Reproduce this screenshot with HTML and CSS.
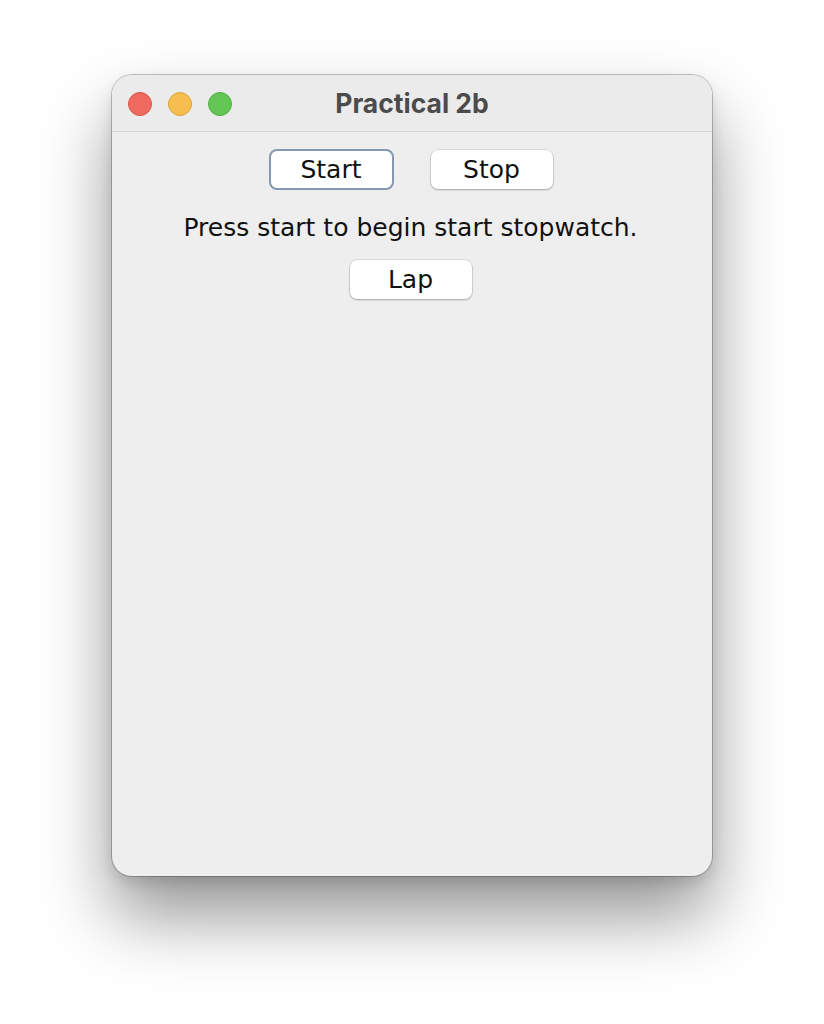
FILE: index.html
```html
<!DOCTYPE html>
<html>
<head>
<meta charset="utf-8">
<link rel="stylesheet" href="styles.css">
</head>
<body>
<div class="desktop">
  <div class="window">
    <div class="titlebar">
      <div class="lights">
        <span class="light red"></span>
        <span class="light yellow"></span>
        <span class="light green"></span>
      </div>
      <div class="title">Practical 2b</div>
    </div>
    <div class="content">
      <div class="row row-top">
        <button class="btn btn-focus">Start</button>
        <button class="btn">Stop</button>
      </div>
      <div class="row row-label">
        <span class="label">Press start to begin start stopwatch.</span>
      </div>
      <div class="row row-lap">
        <button class="btn">Lap</button>
      </div>
    </div>
  </div>
</div>
</body>
</html>
```
FILE: styles.css
```css
html, body {
  margin: 0;
  padding: 0;
  background: #ffffff;
}
.desktop {
  width: 824px;
  height: 1024px;
  padding: 75px 0 0 112px;
  box-sizing: border-box;
}
.window {
  width: 600px;
  height: 801px;
  border-radius: 20px;
  background: #eeeeee;
  box-shadow: 0 0 0 1px rgba(0,0,0,0.22), 0 40px 70px rgba(0,0,0,0.42), 0 6px 14px rgba(0,0,0,0.12);
  overflow: hidden;
  display: flex;
  flex-direction: column;
}
.titlebar {
  height: 56px;
  background: #ebebeb;
  border-bottom: 1px solid #d2d2d2;
  position: relative;
  display: flex;
  align-items: center;
  justify-content: center;
  flex-shrink: 0;
}
.lights {
  position: absolute;
  left: 16px;
  top: 17px;
  display: flex;
  gap: 16px;
}
.light {
  width: 24px;
  height: 24px;
  border-radius: 50%;
  box-sizing: border-box;
}
.red { background: #ee6a5f; border: 1px solid #d9534a; }
.yellow { background: #f5be4f; border: 1px solid #dca33a; }
.green { background: #62c554; border: 1px solid #4fae42; }
.title {
  font-family: Inter, "Liberation Sans", sans-serif;
  font-weight: bold;
  font-size: 26.5px;
  color: #4b4b4b;
  margin-top: -1px;
}
.content {
  display: flex;
  flex-direction: column;
  align-items: center;
  padding-top: 18px;
  padding-right: 3px;
}
.row {
  display: flex;
  justify-content: center;
}
.row-top {
  gap: 37px;
}
.row-label {
  margin-top: 21px;
  height: 32px;
  align-items: center;
}
.row-lap {
  margin-top: 17px;
}
.btn {
  width: 122px;
  height: 39px;
  border: none;
  border-radius: 7px;
  background: #ffffff;
  box-shadow: 0 0 0 0.5px rgba(0,0,0,0.15), 0 1px 2px rgba(0,0,0,0.25);
  font-family: "DejaVu Sans", sans-serif;
  font-size: 25px;
  color: #111111;
  padding: 0;
}
.btn-focus {
  width: 125px;
  height: 41px;
  border: 2px solid #8398b2;
  border-radius: 8px;
  margin-top: -1px;
  box-shadow: none;
}
.label {
  font-family: "DejaVu Sans", sans-serif;
  font-size: 25px;
  color: #111111;
}
```
